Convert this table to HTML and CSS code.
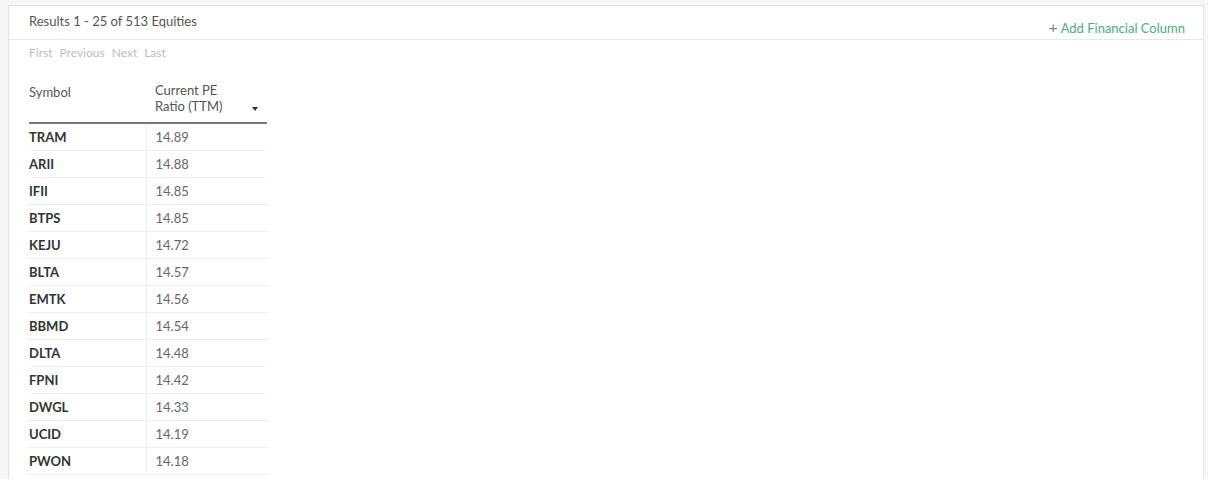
FILE: index.html
```html
<!DOCTYPE html>
<html lang="en">
<head>
    <meta charset="UTF-8">
    <title>Screener Results</title>
    <link rel="stylesheet" href="styles.css">
</head>
<body>
    <div class="page">
        <div class="panel">
            <div class="panel-head">
                <span class="results">Results 1 - 25 of 513 Equities</span>
                <a class="add-column"><span class="plus">+</span> Add Financial Column</a>
            </div>
            <div class="pager">
                <span>First</span><span>Previous</span><span>Next</span><span>Last</span>
            </div>
            <table class="grid">
                <thead>
                    <tr>
                        <th class="col-symbol">Symbol</th>
                        <th class="col-value"><div class="sortable"><span>Current PE<br>Ratio (TTM)</span><i class="caret"></i></div></th>
                    </tr>
                </thead>
                <tbody>
                    <tr><td>TRAM</td><td>14.89</td></tr>
                    <tr><td>ARII</td><td>14.88</td></tr>
                    <tr><td>IFII</td><td>14.85</td></tr>
                    <tr><td>BTPS</td><td>14.85</td></tr>
                    <tr><td>KEJU</td><td>14.72</td></tr>
                    <tr><td>BLTA</td><td>14.57</td></tr>
                    <tr><td>EMTK</td><td>14.56</td></tr>
                    <tr><td>BBMD</td><td>14.54</td></tr>
                    <tr><td>DLTA</td><td>14.48</td></tr>
                    <tr><td>FPNI</td><td>14.42</td></tr>
                    <tr><td>DWGL</td><td>14.33</td></tr>
                    <tr><td>UCID</td><td>14.19</td></tr>
                    <tr><td>PWON</td><td>14.18</td></tr>
                </tbody>
            </table>
        </div>
    </div>
</body>
</html>
```

FILE: styles.css
```css
html,body{
    margin: 0;
    background-color: #fff;
    font-family: Lato, "Open Sans", Arial, sans-serif;
}
.page{
    height: 479px;
    padding: 5px 4px 0 8px;
    box-sizing: border-box;
    background-color: #f7f7f7;
    overflow: hidden;
}
.panel{
    height: 100%;
    background-color: #fff;
    border: 1px solid #e3e3e3;
    border-bottom: none;
    box-sizing: border-box;
    overflow: hidden;
}
.panel-head{
    display: flex;
    justify-content: space-between;
    height: 33px;
    padding: 0 18px 0 20px;
    border-bottom: 1px solid #e8e8e8;
}
.results{
    padding-top: 7px;
    font-size: 13px;
    color: #555;
}
.add-column{
    align-self: flex-end;
    padding-bottom: 3px;
    font-size: 13px;
    color: #4fa983;
    text-decoration: none;
}
.add-column .plus{
    color: #888;
    font-size: 16px;
    line-height: 13px;
}
.pager{
    display: flex;
    gap: 7px;
    padding: 5px 20px 0;
    font-size: 12px;
    color: #bdbdbd;
}
.grid{
    margin: 16px 0 0 20px;
    border-collapse: collapse;
    font-size: 13px;
}
.grid th{
    height: 38px;
    padding: 0;
    font-weight: normal;
    color: #555;
    text-align: left;
    vertical-align: top;
    border-bottom: 2px solid #777;
}
.col-symbol{
    width: 117px;
    padding-top: 8px !important;
    line-height: 16px;
}
.col-value{
    width: 121px;
}
.sortable{
    display: flex;
    align-items: flex-end;
    justify-content: space-between;
    padding: 6px 9px 0 9px;
    line-height: 16px;
}
.caret{
    width: 0;
    height: 0;
    margin-bottom: 3px;
    border-left: 3px solid transparent;
    border-right: 3px solid transparent;
    border-top: 4px solid #333;
}
.grid td{
    height: 26px;
    padding: 0;
    border-bottom: 1px solid #eee;
    color: #666;
}
.grid td:first-child{
    font-weight: bold;
    color: #333;
    border-right: 1px solid #eee;
}
.grid td + td{
    padding-left: 9px;
}
```
